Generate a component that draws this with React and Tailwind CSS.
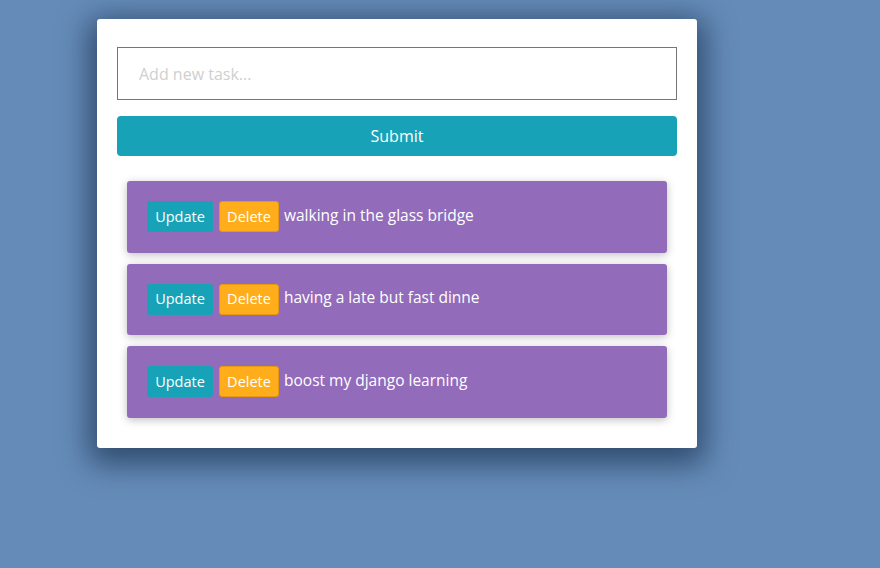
const tasks = [
  "walking in the glass bridge",
  "having a late but fast dinne",
  "boost my django learning",
];

export default function App() {
  return (
    <div
      className="min-h-[568px] w-full bg-[#658cb8] pt-[19px] pl-[97px]"
      style={{ fontFamily: '"Open Sans", "Noto Sans", sans-serif' }}
    >
      <div className="w-[600px] rounded-[3px] bg-white px-5 pt-[28px] pb-[30px] shadow-[0_8px_30px_8px_rgba(20,40,70,0.65)]">
        <input
          type="text"
          placeholder="Add new task..."
          className="block h-[53px] w-full border border-[#767676] px-[21px] text-[16px] text-gray-800 outline-none placeholder:text-[#cfcfcf]"
        />
        <button className="mt-4 flex h-10 w-full items-center justify-center rounded bg-[#17a2b8] text-[16px] text-white">
          Submit
        </button>
        <div className="mt-[25px] flex flex-col gap-[11px] px-[10px]">
          {tasks.map((t) => (
            <div
              key={t}
              className="flex h-[71.5px] items-center rounded-[3px] bg-[#926bbb] px-5 shadow-[0_2px_8px_rgba(0,0,0,0.25)]"
            >
              <button className="h-[31px] w-[66px] rounded-[3px] bg-[#17a2b8] text-[14.5px] text-white">
                Update
              </button>
              <button className="ml-[6px] h-[31px] w-[60px] rounded-[3px] border border-[#e59a10] bg-[#ffad1a] text-[14.5px] text-white">
                Delete
              </button>
              <span className="ml-[5px] -mt-[3px] text-[15.5px] text-white">{t}</span>
            </div>
          ))}
        </div>
      </div>
    </div>
  );
}
